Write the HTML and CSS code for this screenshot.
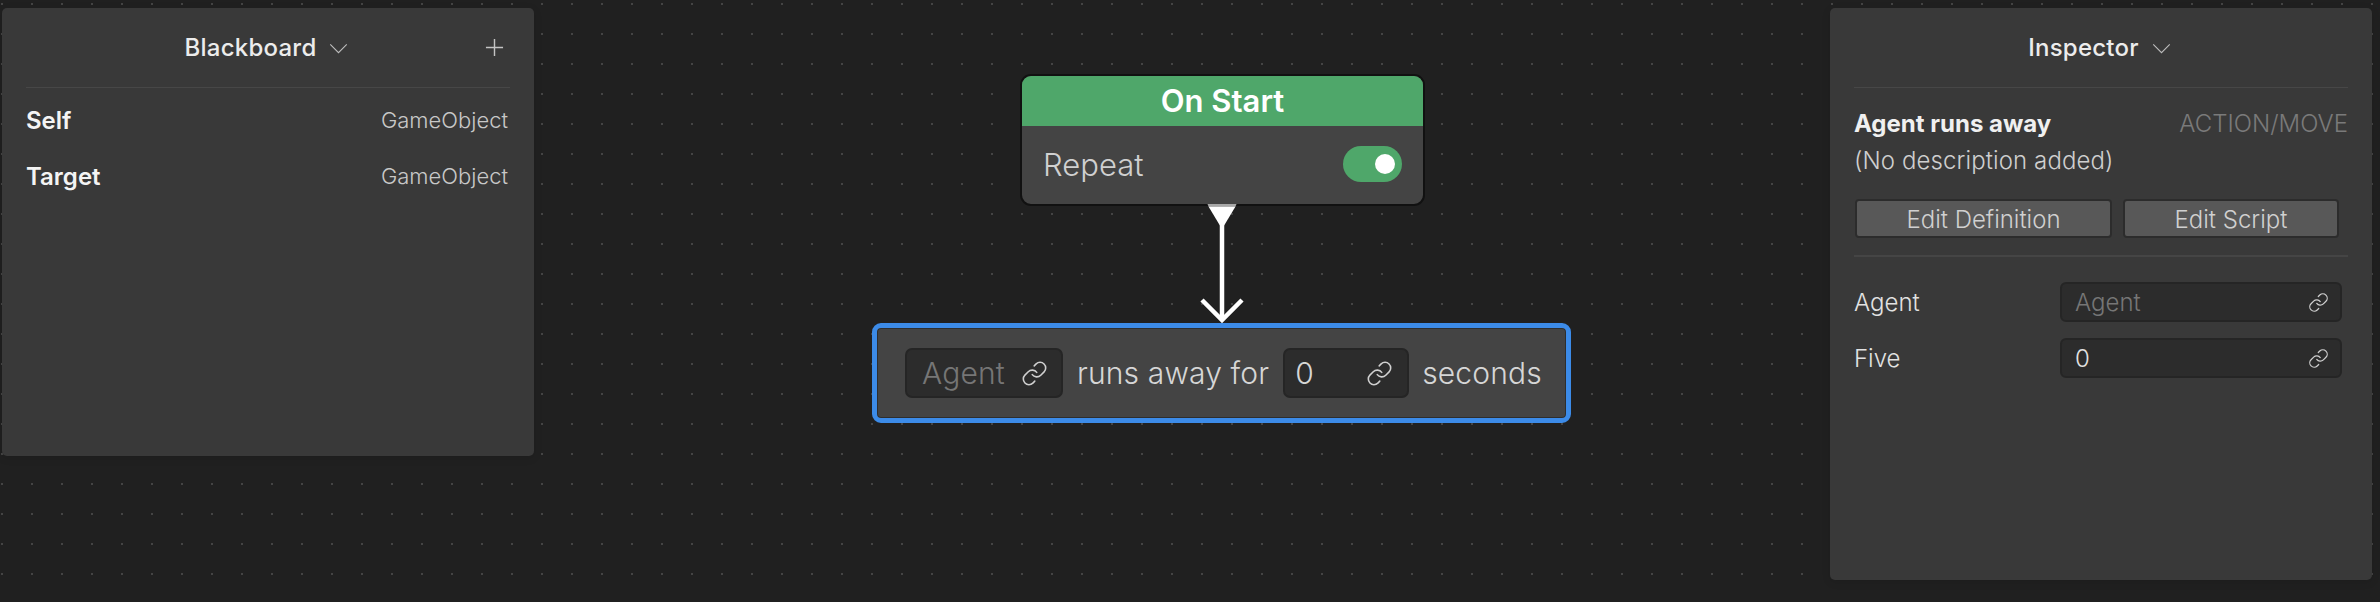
FILE: index.html
```html
<!DOCTYPE html>
<html>
<head>
  <title>Behavior Graph</title>
  <link rel="stylesheet" href="styles.css">
</head>
<body>

<svg class="defs" width="0" height="0">
  <symbol id="link" viewBox="0 0 24 24">
    <path d="M10 13a5 5 0 0 0 7.54.54l3-3a5 5 0 0 0-7.07-7.07l-1.72 1.71"/>
    <path d="M14 11a5 5 0 0 0-7.54-.54l-3 3a5 5 0 0 0 7.07 7.07l1.71-1.71"/>
  </symbol>
  <symbol id="chevron" viewBox="0 0 20 12">
    <path d="M1 1.5l9 9 9-9"/>
  </symbol>
</svg>

<div class="canvas">

  <aside class="panel blackboard">
    <header class="panel-header">
      <span class="panel-title">Blackboard</span>
      <svg class="chevron"><use href="#chevron"/></svg>
      <svg class="plus" viewBox="0 0 20 20"><path d="M10 1v18M1 10h18"/></svg>
    </header>
    <div class="var-row"><span class="var-name">Self</span><span class="var-type">GameObject</span></div>
    <div class="var-row"><span class="var-name">Target</span><span class="var-type">GameObject</span></div>
  </aside>

  <div class="node start-node">
    <div class="node-title">On Start</div>
    <div class="node-body">
      <span>Repeat</span>
      <span class="toggle"><span class="knob"></span></span>
    </div>
  </div>

  <svg class="edge" viewBox="0 0 60 122">
    <path class="port-top" d="M15.5 0h29l-1 2.500h-27z"/>
    <path class="port" d="M16.500 2.500h27L30 25z"/>
    <path class="wire" d="M30 20v94"/>
    <path class="wire" d="M10 96l20 20 20-20"/>
  </svg>

  <div class="node action-node">
    <div class="chip agent-chip"><span class="placeholder">Agent</span><svg class="link-icon"><use href="#link"/></svg></div>
    <span class="word">runs away for</span>
    <div class="chip zero-chip"><span>0</span><svg class="link-icon"><use href="#link"/></svg></div>
    <span class="word">seconds</span>
  </div>

  <aside class="panel inspector">
    <header class="panel-header">
      <span class="panel-title">Inspector</span>
      <svg class="chevron"><use href="#chevron"/></svg>
    </header>
    <div class="info">
      <div class="info-top">
        <span class="info-name">Agent runs away</span>
        <span class="info-cat">ACTION/MOVE</span>
      </div>
      <div class="info-desc">(No description added)</div>
      <div class="buttons">
        <button class="btn btn-def">Edit Definition</button>
        <button class="btn btn-script">Edit Script</button>
      </div>
    </div>
    <div class="fields">
      <label>Agent</label>
      <div class="field"><span class="placeholder">Agent</span><svg class="link-icon"><use href="#link"/></svg></div>
      <label>Five</label>
      <div class="field"><span>0</span><svg class="link-icon"><use href="#link"/></svg></div>
    </div>
  </aside>

</div>

</body>
</html>
```

FILE: styles.css
```css
* {
  box-sizing: border-box;
}

html, body {
  margin: 0;
  height: 100%;
  background-color: #202020;
}

.defs {
  position: absolute;
}

.canvas {
  position: relative;
  width: 2380px;
  height: 602px;
  overflow: hidden;
  font-family: "Inter", "Liberation Sans", sans-serif;
  color: #d2d2d2;
  background-color: #202020;
  background-image: radial-gradient(circle at 1px 1px, #444 1px, transparent 1.2px);
  background-size: 30px 30px;
  background-position: 1px 3px;
}

/* side panels */
.panel {
  position: absolute;
  top: 8px;
  background-color: #393939;
  border-radius: 5px;
  padding: 0 24px;
  box-shadow: 0 2px 8px rgba(0, 0, 0, 0.12);
}

.blackboard {
  left: 2px;
  width: 532px;
  height: 448px;
}

.inspector {
  left: 1830px;
  width: 542px;
  height: 572px;
}

.panel-header {
  display: flex;
  align-items: center;
  justify-content: center;
  position: relative;
  height: 80px;
  padding-right: 3px;
  border-bottom: 1px solid #474747;
}

.panel-title {
  font-size: 24px;
  font-weight: 500;
  letter-spacing: 0.01em;
  color: #ececec;
}

.chevron {
  width: 19px;
  height: 11px;
  margin-left: 13px;
  margin-top: 2px;
  fill: none;
  stroke: #bdbdbd;
  stroke-width: 1.2;
}

.plus {
  position: absolute;
  right: 6px;
  top: 30px;
  width: 19px;
  height: 19px;
  fill: none;
  stroke: #c4c4c4;
  stroke-width: 1.5;
}

.var-row {
  display: flex;
  align-items: center;
  justify-content: space-between;
  height: 56px;
}

.panel-header + .var-row {
  margin-top: 4px;
}

.var-name {
  font-size: 24px;
  font-weight: 600;
  color: #f4f4f4;
}

.var-type {
  font-size: 22px;
  font-weight: 300;
  color: #c8c8c8;
  margin-right: 2px;
}

/* graph nodes */
.node {
  position: absolute;
}

.start-node {
  left: 1020px;
  top: 74px;
  width: 405px;
  height: 132px;
  border: 2px solid #111;
  border-radius: 11px;
  background-color: #444;
  overflow: hidden;
}

.node-title {
  height: 50px;
  line-height: 50px;
  text-align: center;
  font-size: 31px;
  font-weight: 600;
  color: #fff;
  background-color: #4fa76a;
}

.node-body {
  display: flex;
  align-items: center;
  justify-content: space-between;
  height: 78px;
  padding: 0 21px 2px 21px;
  font-size: 31px;
  font-weight: 300;
  color: #d0d0d0;
}

.toggle {
  display: flex;
  align-items: center;
  justify-content: flex-end;
  width: 59px;
  height: 36px;
  padding-right: 7px;
  border-radius: 18px;
  background-color: #4fa76a;
}

.knob {
  width: 20px;
  height: 20px;
  border-radius: 50%;
  background-color: #fff;
}

.edge {
  position: absolute;
  left: 1192px;
  top: 204px;
  width: 60px;
  height: 122px;
  fill: none;
}

.port-top {
  fill: #a8a8a8;
}

.port {
  fill: #fff;
}

.wire {
  stroke: #fff;
  stroke-width: 4.5;
}

.action-node {
  left: 872px;
  top: 323px;
  width: 699px;
  height: 100px;
  display: flex;
  align-items: center;
  padding-left: 28px;
  border: 5px solid #3c8be8;
  border-radius: 9px;
  background-color: #444;
  box-shadow: inset 0 0 0 1px #2e2e2e;
  font-size: 30px;
  font-weight: 300;
  letter-spacing: 0.15px;
  color: #d6d6d6;
}

.chip {
  display: flex;
  align-items: center;
  justify-content: space-between;
  height: 50px;
  border: 2px solid #252525;
  border-radius: 7px;
  background-color: #2c2c2c;
}

.agent-chip {
  width: 158px;
  padding: 0 13px 0 15px;
  margin-right: 14px;
}

.zero-chip {
  width: 126px;
  padding: 0 14px 0 10px;
  margin: 0 13px 0 14px;
}

.placeholder {
  color: #767676;
}

.link-icon {
  fill: none;
  stroke: #d0d0d0;
  stroke-width: 1.4;
  stroke-linecap: round;
  stroke-linejoin: round;
}

.chip .link-icon {
  width: 27px;
  height: 27px;
}

/* inspector content */
.info-top {
  display: flex;
  align-items: center;
  justify-content: space-between;
  padding-top: 21px;
}

.info-name {
  font-size: 24px;
  font-weight: 700;
  color: #f0f0f0;
}

.info-cat {
  font-size: 24px;
  font-weight: 300;
  color: #7a7a7a;
}

.info-desc {
  margin-top: 8px;
  font-size: 24px;
  font-weight: 300;
  letter-spacing: 0.1px;
  color: #cfcfcf;
}

.buttons {
  display: flex;
  gap: 11px;
  margin-top: 24px;
  padding-left: 1px;
  padding-bottom: 17px;
  border-bottom: 2px solid #454545;
}

.btn {
  height: 39px;
  padding: 1px 0 0;
  border: 2px solid #2c2c2c;
  border-radius: 4px;
  background-color: #585858;
  font-family: inherit;
  font-size: 24px;
  font-weight: 300;
  color: #d0d0d0;
}

.btn-def {
  width: 257px;
}

.btn-script {
  width: 216px;
}

.fields {
  display: grid;
  grid-template-columns: 206px 282px;
  row-gap: 16px;
  align-items: center;
  margin-top: 25px;
  font-size: 24px;
  font-weight: 300;
  color: #e2e2e2;
}

.field {
  display: flex;
  align-items: center;
  justify-content: space-between;
  height: 40px;
  padding: 0 11px 0 13px;
  border: 2px solid #252525;
  border-radius: 6px;
  background-color: #2c2c2c;
}

.field .link-icon {
  width: 21px;
  height: 21px;
}
```
